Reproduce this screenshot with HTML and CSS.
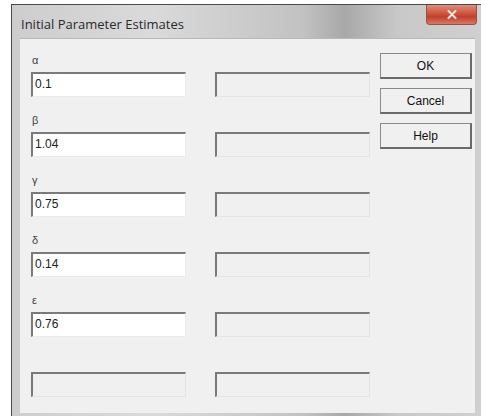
FILE: index.html
```html
<!DOCTYPE html>
<html>
<head>
<meta charset="utf-8">
<title>Initial Parameter Estimates</title>
<link rel="stylesheet" href="styles.css">
</head>
<body>
<div class="window">
  <div class="titlebar">
    <span class="title">Initial Parameter Estimates</span>
    <span class="close">
      <svg width="10" height="9" viewBox="0 0 10 9"><path d="M1.5 1 L8.5 8 M8.5 1 L1.5 8" stroke="#f4e6e2" stroke-width="2" stroke-linecap="round"/></svg>
    </span>
  </div>
  <div class="client">
    <div class="fields">
      <div class="row">
        <div class="label">α</div>
        <div class="boxes"><div class="edit">0.1</div><div class="edit off"></div></div>
      </div>
      <div class="row">
        <div class="label">β</div>
        <div class="boxes"><div class="edit">1.04</div><div class="edit off"></div></div>
      </div>
      <div class="row">
        <div class="label">γ</div>
        <div class="boxes"><div class="edit">0.75</div><div class="edit off"></div></div>
      </div>
      <div class="row">
        <div class="label">δ</div>
        <div class="boxes"><div class="edit">0.14</div><div class="edit off"></div></div>
      </div>
      <div class="row">
        <div class="label">ε</div>
        <div class="boxes"><div class="edit">0.76</div><div class="edit off"></div></div>
      </div>
      <div class="row">
        <div class="label"></div>
        <div class="boxes"><div class="edit off"></div><div class="edit off"></div></div>
      </div>
    </div>
    <div class="buttons">
      <button class="btn">OK</button>
      <button class="btn">Cancel</button>
      <button class="btn">Help</button>
    </div>
  </div>
</div>
</body>
</html>
```
FILE: styles.css
```css
html, body {
  margin: 0;
  padding: 0;
  background: #fff;
}

.window {
  margin: 4px 0 0 11px;
  width: 470px;
  height: 412px;
  box-sizing: border-box;
  border-top: 1px solid #4a4a4a;
  border-left: 1px solid #4a4a4a;
  background: linear-gradient(90deg, #cdcdcd 0%, #dadada 30%, #c2c2c2 62%, #a8a8a8 71%, #c8c8c8 82%, #d0d0d0 100%);
  display: flex;
  flex-direction: column;
  padding: 0 6px 5px 8px;
  font-family: "Liberation Sans", Arial, sans-serif;
}

.titlebar {
  height: 33px;
  display: flex;
  align-items: flex-start;
  justify-content: space-between;
  flex: none;
}

.title {
  margin-top: 10px;
  margin-left: 1px;
  font-family: "Open Sans", "Noto Sans", sans-serif;
  font-size: 13px;
  color: #2a2a2a;
}

.close {
  width: 49px;
  height: 19px;
  margin-right: -2px;
  background: linear-gradient(180deg, #dc8f80 0%, #cf5a44 40%, #c0402a 62%, #d67a66 100%);
  border: 1px solid #9a5046;
  border-top: none;
  border-radius: 0 0 4px 4px;
  display: flex;
  align-items: center;
  justify-content: center;
}

.client {
  flex: 1;
  background: #f0f0f0;
  border-top: 1px solid #b8b8b8;
  display: flex;
  padding: 14px 0 0 11px;
}

.fields {
  display: flex;
  flex-direction: column;
}

.row {
  display: flex;
  flex-direction: column;
  margin-bottom: 16px;
}

.label {
  height: 14px;
  line-height: 14px;
  margin-bottom: 5px;
  font-size: 11px;
  color: #444;
  padding-left: 1px;
}

.boxes {
  display: flex;
  gap: 29px;
}

.edit {
  width: 155px;
  height: 25px;
  box-sizing: border-box;
  background: #fff;
  border-top: 2px solid #7a7a7a;
  border-left: 2px solid #7a7a7a;
  border-right: 1px solid #ececec;
  border-bottom: 1px solid #ececec;
  font-size: 12px;
  line-height: 20px;
  padding-left: 2px;
  color: #222;
}

.edit.off {
  background: #f0f0f0;
  border-right-color: #e4e4e4;
  border-bottom-color: #e4e4e4;
}

.buttons {
  display: flex;
  flex-direction: column;
  gap: 9px;
  margin-left: 10px;
}

.btn {
  width: 92px;
  height: 26px;
  box-sizing: border-box;
  background: #f0f0f0;
  border: 1px solid #8a8a8a;
  border-right: 2px solid #6a6a6a;
  border-bottom: 2px solid #6a6a6a;
  font-family: "Liberation Sans", Arial, sans-serif;
  font-size: 12px;
  color: #111;
  padding: 0;
}
```
